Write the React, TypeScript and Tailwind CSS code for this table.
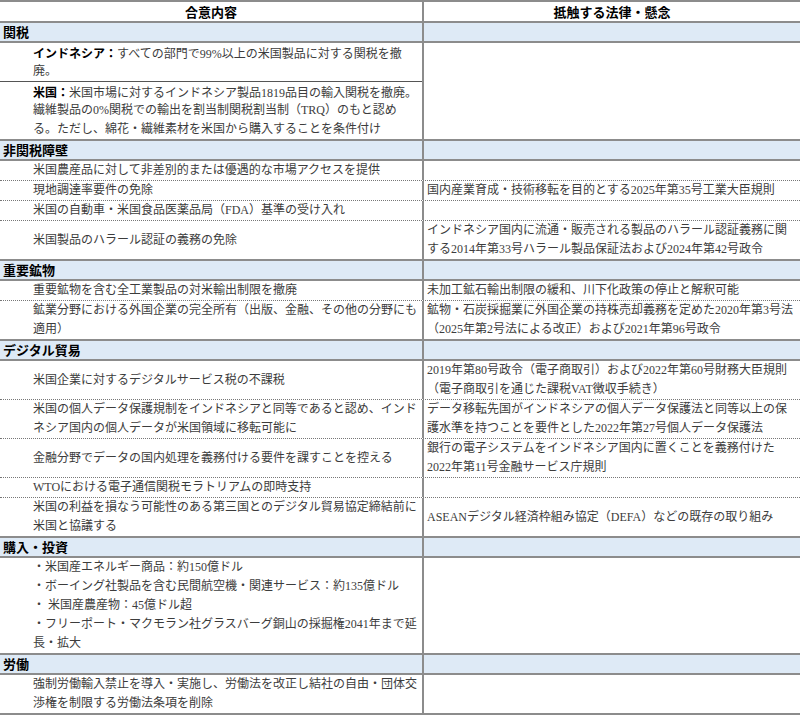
import type { ReactNode } from "react";

type Row = { left: ReactNode[]; right?: ReactNode[] };
type Section = { title: string; rows: Row[] };

const sections: Section[] = [
  {
    title: "非関税障壁",
    rows: [
      { left: ["米国農産品に対して非差別的または優遇的な市場アクセスを提供"] },
      {
        left: ["現地調達率要件の免除"],
        right: ["国内産業育成・技術移転を目的とする2025年第35号工業大臣規則"],
      },
      { left: ["米国の自動車・米国食品医薬品局（FDA）基準の受け入れ"] },
      {
        left: ["米国製品のハラール認証の義務の免除"],
        right: [
          "インドネシア国内に流通・販売される製品のハラール認証義務に関",
          "する2014年第33号ハラール製品保証法および2024年第42号政令",
        ],
      },
    ],
  },
  {
    title: "重要鉱物",
    rows: [
      {
        left: ["重要鉱物を含む全工業製品の対米輸出制限を撤廃"],
        right: ["未加工鉱石輸出制限の緩和、川下化政策の停止と解釈可能"],
      },
      {
        left: ["鉱業分野における外国企業の完全所有（出版、金融、その他の分野にも", "適用）"],
        right: [
          "鉱物・石炭採掘業に外国企業の持株売却義務を定めた2020年第3号法",
          "（2025年第2号法による改正）および2021年第96号政令",
        ],
      },
    ],
  },
  {
    title: "デジタル貿易",
    rows: [
      {
        left: ["米国企業に対するデジタルサービス税の不課税"],
        right: [
          "2019年第80号政令（電子商取引）および2022年第60号財務大臣規則",
          "（電子商取引を通じた課税VAT徴収手続き）",
        ],
      },
      {
        left: [
          "米国の個人データ保護規制をインドネシアと同等であると認め、インド",
          "ネシア国内の個人データが米国領域に移転可能に",
        ],
        right: [
          "データ移転先国がインドネシアの個人データ保護法と同等以上の保",
          "護水準を持つことを要件とした2022年第27号個人データ保護法",
        ],
      },
      {
        left: ["金融分野でデータの国内処理を義務付ける要件を課すことを控える"],
        right: ["銀行の電子システムをインドネシア国内に置くことを義務付けた", "2022年第11号金融サービス庁規則"],
      },
      { left: ["WTOにおける電子通信関税モラトリアムの即時支持"] },
      {
        left: ["米国の利益を損なう可能性のある第三国とのデジタル貿易協定締結前に", "米国と協議する"],
        right: ["ASEANデジタル経済枠組み協定（DEFA）などの既存の取り組み"],
      },
    ],
  },
  {
    title: "購入・投資",
    rows: [
      {
        left: [
          "・米国産エネルギー商品：約150億ドル",
          "・ボーイング社製品を含む民間航空機・関連サービス：約135億ドル",
          "・ 米国産農産物：45億ドル超",
          "・フリーポート・マクモラン社グラスバーグ銅山の採掘権2041年まで延",
          "長・拡大",
        ],
      },
    ],
  },
  {
    title: "労働",
    rows: [
      {
        left: [
          "強制労働輸入禁止を導入・実施し、労働法を改正し結社の自由・団体交",
          "渉権を制限する労働法条項を削除",
        ],
      },
    ],
  },
];

// fixed-height lines so mixed fonts don't grow the line box
const Lines = ({ lines }: { lines?: ReactNode[] }) => (
  <div className="flex flex-col">
    {(lines ?? []).map((l, i) => (
      <div key={i} className="h-[19px] whitespace-nowrap leading-[19px]">
        {l}
      </div>
    ))}
  </div>
);

const SectionHeader = ({ title }: { title: string }) => (
  <div className="flex h-[20px] border-t-2 border-[#8c8c8c] bg-[#deeaf6]">
    <div className="w-[424px] shrink-0 border-r-2 border-[#8c8c8c] pl-[3px] font-['Noto_Sans_CJK_JP',sans-serif] text-[13px] font-bold leading-[18px] text-black">
      {title}
    </div>
    <div className="flex-1" />
  </div>
);

const Bold = ({ children }: { children: ReactNode }) => (
  <span className="font-['Noto_Sans_CJK_JP',sans-serif] font-bold text-black">{children}</span>
);

export default function App() {
  return (
    <div className="w-[800px] bg-white font-['Liberation_Serif','Noto_Sans_CJK_JP',serif] text-[12px] text-[#3c3c3c]">
      <div className="flex h-[21px] border-t-2 border-[#8c8c8c]">
        <div className="flex w-[424px] shrink-0 items-center justify-center border-r-2 border-[#8c8c8c] font-['Noto_Sans_CJK_JP',sans-serif] text-[13px] font-bold text-black">
          合意内容
        </div>
        <div className="flex flex-1 items-center justify-center font-['Noto_Sans_CJK_JP',sans-serif] text-[13px] font-bold text-black">
          抵触する法律・懸念
        </div>
      </div>

      <SectionHeader title="関税" />
      <div className="flex border-t-2 border-[#8c8c8c]">
        <div className="w-[424px] shrink-0 border-r-2 border-[#8c8c8c]">
          <div className="border-b border-[#555] pl-[33px]">
            <Lines
              lines={[
                <>
                  <Bold>インドネシア：</Bold>すべての部門で99%以上の米国製品に対する関税を撤
                </>,
                "廃。",
              ]}
            />
          </div>
          <div className="pl-[33px]">
            <Lines
              lines={[
                <>
                  <Bold>米国：</Bold>米国市場に対するインドネシア製品1819品目の輸入関税を撤廃。
                </>,
                "繊維製品の0%関税での輸出を割当制関税割当制（TRQ）のもと認め",
                "る。ただし、綿花・繊維素材を米国から購入することを条件付け",
              ]}
            />
          </div>
        </div>
        <div className="flex-1" />
      </div>

      {sections.map((s) => (
        <div key={s.title}>
          <SectionHeader title={s.title} />
          <div className="border-t-2 border-[#8c8c8c]">
            {s.rows.map((r, i) => (
              <div
                key={i}
                className={
                  i < s.rows.length - 1
                    ? "flex min-h-[20px] border-b border-dotted border-[#777]"
                    : "flex min-h-[19px]"
                }
              >
                <div className="flex w-[424px] shrink-0 items-center border-r-2 border-[#8c8c8c] pl-[33px]">
                  <Lines lines={r.left} />
                </div>
                <div className="flex flex-1 items-center pl-[3px]">
                  <Lines lines={r.right} />
                </div>
              </div>
            ))}
          </div>
        </div>
      ))}
      <div className="border-t-2 border-[#8c8c8c]" />
    </div>
  );
}
